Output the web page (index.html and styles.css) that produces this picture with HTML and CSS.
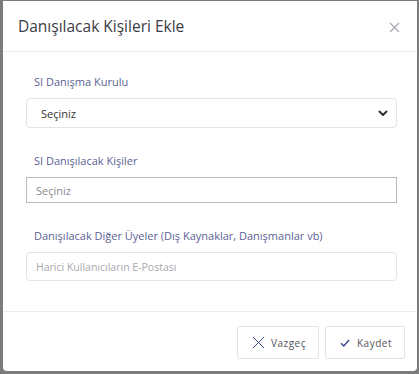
FILE: index.html
```html
<!DOCTYPE html>
<html lang="tr">
<head>
  <meta charset="UTF-8" />
  <meta name="viewport" content="width=device-width, initial-scale=1.0"/>
  <title>Danışılacak Kişileri Ekle</title>
  <link rel="stylesheet" href="styles.css">
</head>
<body>

  <div class="modal">
    <!-- başlık -->
    <div class="modal-header">
      <h2>Danışılacak Kişileri Ekle</h2>
      <span class="close">
        <svg width="11" height="11" viewBox="0 0 11 11"><path d="M1 1L10 10M10 1L1 10" stroke="#a9a9b8" stroke-width="1.3" fill="none"/></svg>
      </span>
    </div>

    <div class="modal-body">
      <div class="field">
        <label>SI Danışma Kurulu</label>
        <div class="select">
          <span>Seçiniz</span>
          <svg width="10" height="7" viewBox="0 0 10 7"><path d="M1.5 1.5L5 5L8.5 1.5" stroke="#333" stroke-width="2" fill="none" stroke-linecap="round" stroke-linejoin="round"/></svg>
        </div>
      </div>

      <div class="field">
        <label>SI Danışılacak Kişiler</label>
        <div class="input square">Seçiniz</div>
      </div>

      <div class="field">
        <label>Danışılacak Diğer Üyeler (Dış Kaynaklar, Danışmanlar vb)</label>
        <div class="input light">Harici Kullanıcıların E-Postası</div>
      </div>
    </div>

    <div class="modal-footer">
      <button class="btn cancel">
        <svg width="13" height="13" viewBox="0 0 13 13"><path d="M1 1L12 12M12 1L1 12" stroke="#3b4a8c" stroke-width="1" fill="none"/></svg>
        Vazgeç
      </button>
      <button class="btn save">
        <svg width="10" height="8" viewBox="0 0 10 8"><path d="M1 4.2L3.8 7L9 1" stroke="#3b4a8c" stroke-width="1.4" fill="none"/></svg>
        Kaydet
      </button>
    </div>
  </div>

</body>
</html>
```

FILE: styles.css
```css
body {
  margin: 0;
  padding: 0;
  background-color: #7b7b7d;
  font-family: 'Open Sans', 'Noto Sans', sans-serif;
}
.modal {
  width: 414px;
  height: 370px;
  margin: 1px 0 0 3px;
  background: white;
  border-radius: 0 0 4px 4px;
  box-sizing: border-box;
  display: flex;
  flex-direction: column;
}
.modal-header {
  flex-shrink: 0;
  height: 51px;
  border-bottom: 1px solid #ececf0;
  display: flex;
  align-items: center;
  justify-content: space-between;
  padding: 0 17px 0 15px;
  box-sizing: border-box;
}
.modal-header h2 {
  margin: 0;
  font-size: 15.5px;
  font-weight: 400;
  color: #3c3c44;
}
.close {
  display: flex;
  margin-top: 2px;
}
.modal-body {
  flex: 1;
  padding: 22px 20px 0 23px;
}
.field {
  margin-bottom: 25px;
}
.field label {
  display: block;
  font-size: 11px;
  line-height: 15px;
  color: #5c6294;
  margin-left: 8px;
  margin-bottom: 9px;
}
.select {
  height: 30px;
  border: 1px solid #e3e3e8;
  border-radius: 4px;
  box-sizing: border-box;
  display: flex;
  align-items: center;
  justify-content: space-between;
  padding: 0 8px 0 14px;
  font-size: 11px;
  color: #333;
}
.input {
  height: 26px;
  box-sizing: border-box;
  display: flex;
  align-items: center;
  padding: 0 9px;
  font-size: 11px;
}
.input.square {
  border: 1px solid #b9b9bd;
  color: #8a8a8e;
}
.input.light {
  height: 29px;
  border: 1px solid #e3e3e8;
  border-radius: 4px;
  color: #a9a9ae;
  font-size: 10.5px;
}
.modal-footer {
  flex-shrink: 0;
  height: 60px;
  box-sizing: border-box;
  border-top: 1px solid #ececf0;
  display: flex;
  justify-content: flex-end;
  align-items: flex-start;
  gap: 6px;
  padding: 14px 12px 0 0;
}
.btn {
  height: 33px;
  background: white;
  border: 1px solid #e3e3e8;
  border-radius: 2px;
  display: flex;
  align-items: center;
  padding: 0 12px 0 14px;
  font-family: inherit;
  font-size: 10px;
  letter-spacing: 0.5px;
  color: #55555c;
}
.cancel {
  gap: 6px;
}
.save {
  gap: 7px;
}
```
